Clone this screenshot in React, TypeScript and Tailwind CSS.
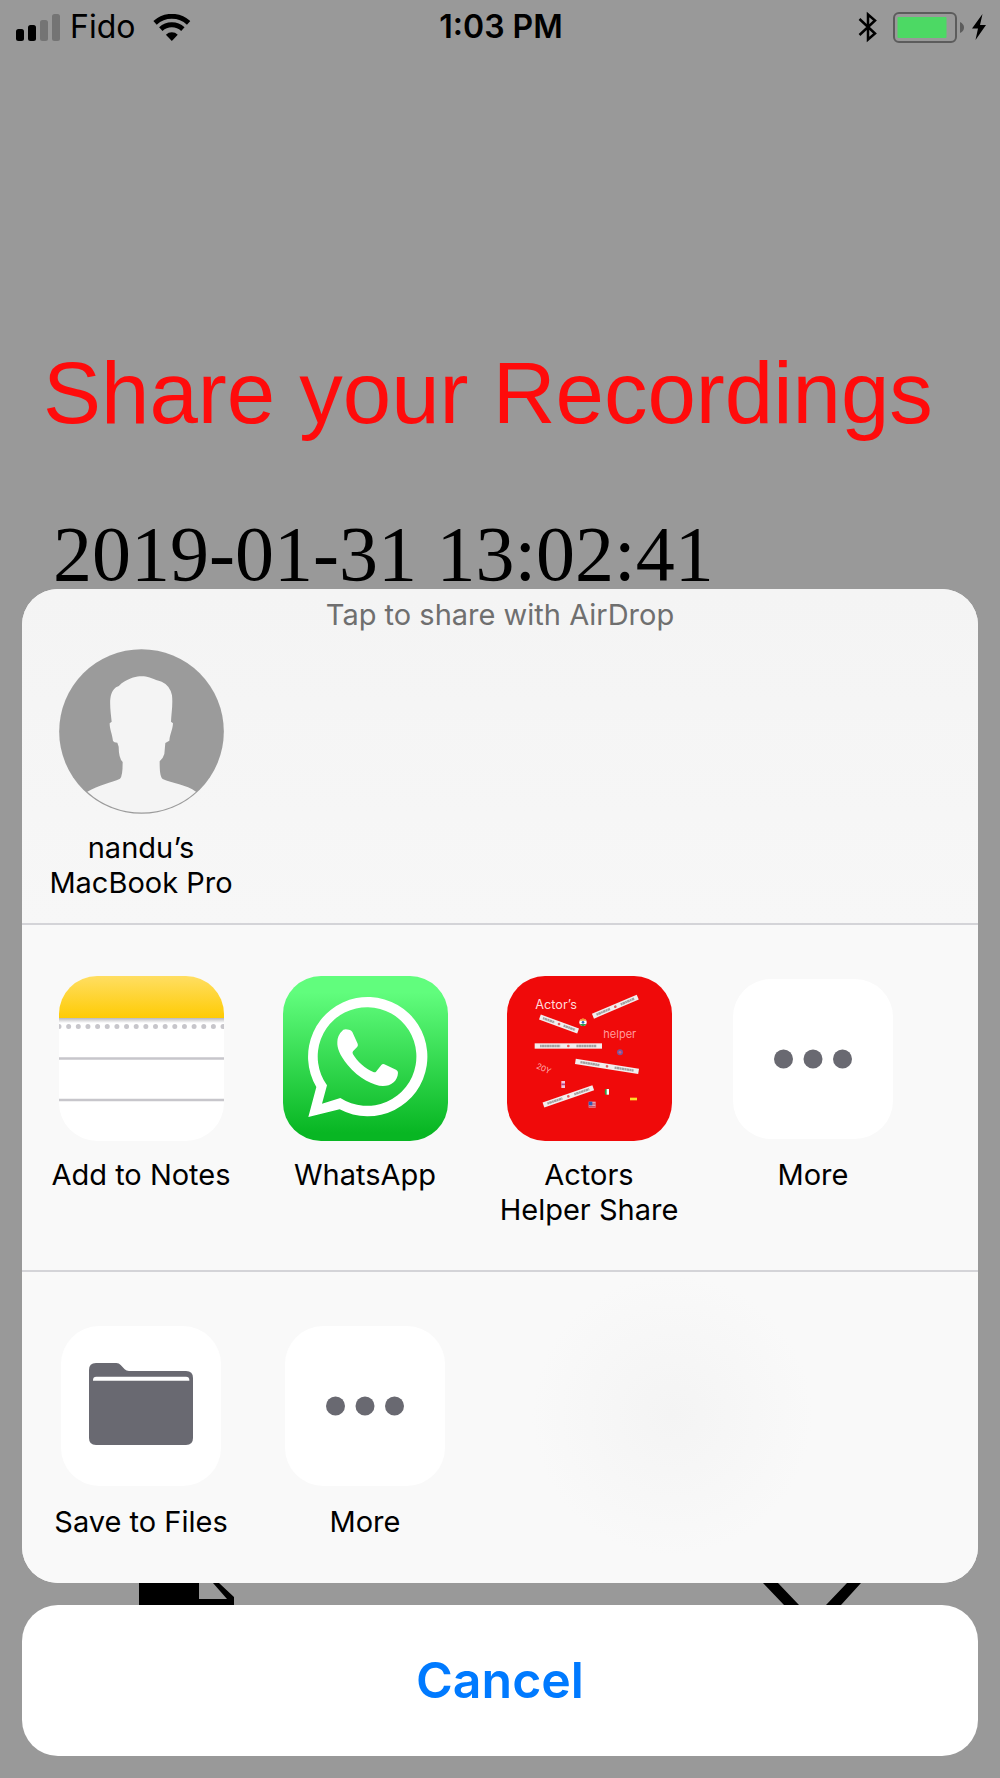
import type { ReactNode } from 'react';

interface ShareItemProps {
  label: string;
  children: ReactNode;
}

function ShareItem({ label, children }: ShareItemProps) {
  return (
    <button type="button" className="flex w-56 flex-col items-center gap-4">
      <span className="flex size-[165px] items-center justify-center">{children}</span>
      <span className="text-[29px] leading-[35px] whitespace-pre-line text-black">{label}</span>
    </button>
  );
}

function SignalIcon() {
  return (
    <svg width="44" height="27" viewBox="0 0 44 27" aria-hidden="true">
      <rect x="0" y="15" width="8" height="12" rx="2.500" />
      <rect x="12" y="11" width="8" height="16" rx="2.500" />
      <rect x="24" y="6" width="8" height="21" rx="2.500" fill="#747474" />
      <rect x="36" y="0" width="8" height="27" rx="2.500" fill="#747474" />
    </svg>
  );
}

function WifiIcon() {
  return (
    <svg width="38" height="27" viewBox="452 39 113 82" aria-hidden="true">
      <g fill="none" stroke="#000" strokeWidth="15">
        <path d="M457 66 A75 75 0 0 1 559 66" />
        <path d="M474.500 85 A49 49 0 0 1 541.500 85" />
      </g>
      <path d="M490 102 A26 26 0 0 1 526 102 L508 121 Z" />
    </svg>
  );
}

function BluetoothIcon() {
  return (
    <svg width="19" height="32" viewBox="0 0 19 32" fill="none" stroke="#000" strokeWidth="2.500" aria-hidden="true">
      <path d="M1.500 8 L17 22.500 L10 28.500 V3.500 L17 9.500 L1.500 24" />
    </svg>
  );
}

function BatteryIcon() {
  return (
    <svg width="71" height="31" viewBox="0 0 71 31" aria-hidden="true">
      <rect x="1" y="1" width="62" height="29" rx="5" fill="none" stroke="#5c5c5c" strokeWidth="2" />
      <rect x="4.500" y="5" width="49" height="21" rx="1" fill="#4cd964" />
      <path d="M67 10 Q71 12 71 15.500 Q71 19 67 21 Z" fill="#5c5c5c" />
    </svg>
  );
}

function BoltIcon() {
  return (
    <svg width="14" height="26" viewBox="0 0 14 26" aria-hidden="true">
      <path d="M10.500 0 L0 14.500 H6 L3.500 26 L14 11 H8 Z" />
    </svg>
  );
}

function AvatarIcon() {
  return (
    <svg className="size-full" viewBox="117 57 495 495" aria-hidden="true">
      <circle cx="364.500" cy="304.500" r="247" fill="#9b9b9b" />
      <path
        fill="#f4f4f4"
        d="M202 485 C235 465 275 458 300 446 Q308 440 308 396 Q296 384 296 350 L292 338 Q282 338 279 333 C276 310 269 298 269 280 L275 275 C270 230 264 190 288 172 Q296 171 305 160 C335 140 355 138 371 139 C388 140 400 149 425 155 Q450 166 456 196 C459 225 454 250 453 275 L459 280 C458 300 450 310 448 332 L436 339 L433 372 Q430 384 419 394 C419 420 420 440 428 447 C455 460 500 464 528 485 A243 243 0 0 1 202 485 Z"
      />
    </svg>
  );
}

function NotesIcon() {
  return (
    <svg className="size-full rounded-[38px]" viewBox="0 0 165 165" aria-hidden="true">
      <defs>
        <linearGradient id="notes-top" x1="0" y1="0" x2="0" y2="1">
          <stop offset="0" stopColor="#ffde62" />
          <stop offset="1" stopColor="#fecb04" />
        </linearGradient>
        <linearGradient id="notes-shade" x1="0" y1="0" x2="0" y2="1">
          <stop offset="0" stopColor="#a9a9ad" />
          <stop offset="1" stopColor="#ffffff" />
        </linearGradient>
      </defs>
      <rect width="165" height="165" fill="#fff" />
      <rect y="41" width="165" height="6" fill="url(#notes-shade)" />
      <rect width="165" height="42" fill="url(#notes-top)" />
      <path d="M0 50.500 H166" stroke="#c7c6cb" strokeWidth="5" strokeLinecap="round" strokeDasharray="0 9.650" />
      <path d="M0 82.500 H165 M0 124 H165" stroke="#c7c6cb" strokeWidth="2.600" />
    </svg>
  );
}

function WhatsAppIcon() {
  return (
    <svg className="size-full rounded-[38px]" viewBox="728 47 495 495" aria-hidden="true">
      <defs>
        <linearGradient id="wa-bg" x1="0" y1="0" x2="0" y2="1">
          <stop offset="0.100" stopColor="#61fd7d" />
          <stop offset="0.950" stopColor="#08b623" />
        </linearGradient>
      </defs>
      <rect x="728" y="47" width="495" height="495" fill="url(#wa-bg)" />
      <path
        fill="#fff"
        fillRule="evenodd"
        d="M828 380 A179 179 0 1 1 898 447 L804 470 Z M860 375 L845 430 L900 413 A148 148 0 1 0 860 375 Z"
      />
      <path
        fill="#fff"
        d="M909 208 Q915 206 926 208 Q933 209 936 215 L952 250 Q954 255 951 259 L938 273 Q935 277 938 282 C952 305 973 324 999 335 Q1004 337 1007 334 L1023 314 Q1027 310 1032 312 L1067 328 Q1073 331 1073 337 C1072 362 1052 377 1028 377 C1000 377 955 354 922 314 C897 283 890 262 891 245 Q891 224 909 208 Z"
      />
    </svg>
  );
}

const strips = [
  { x: 206, y: 191, length: 122, angle: 20 },
  { x: 375, y: 139, length: 146, angle: -23 },
  { x: 234, y: 257, length: 202, angle: 0 },
  { x: 350, y: 318, length: 192, angle: 9 },
  { x: 234, y: 408, length: 158, angle: -19 },
];

function ActorsHelperIcon() {
  return (
    <svg className="size-full rounded-[38px]" viewBox="50 47 495 495" aria-hidden="true">
      <rect x="50" y="47" width="495" height="495" fill="#f00a0a" />
      <text x="135" y="147" fontSize="38" fill="#ffdada">Actor’s</text>
      <text x="339" y="233" fontSize="33" fill="#ff9c9c">helper</text>
      <text x="136" y="323" fontSize="24" fill="#ffb4b4" transform="rotate(24 136 323)">20Y</text>
      {strips.map(({ x, y, length, angle }) => (
        <g key={y} transform={`translate(${x} ${y}) rotate(${angle})`}>
          <rect x={-length / 2} y="-8" width={length} height="16" fill="#f2eeee" />
          <path
            d={`M${-length * 0.42} 0 H${-length * 0.12} M${length * 0.12} 0 H${length * 0.42}`}
            stroke="#a39e9e"
            strokeWidth="7"
            strokeDasharray="5 1 8 1"
          />
          <circle r="4" fill="#e35d5d" />
        </g>
      ))}
      {/* flags */}
      <circle cx="278" cy="186" r="11" fill="#fff" />
      <path d="M268 181 A11 11 0 0 1 288 181 Z" fill="#f39a32" />
      <path d="M268 191 A11 11 0 0 0 288 191 Z" fill="#2f9f45" />
      <circle cx="278" cy="186" r="4" fill="#3461b8" />
      <circle cx="389" cy="276" r="9" fill="#77559a" />
      <circle cx="389" cy="276" r="4" fill="#d65c80" />
      <rect x="213" y="362" width="11" height="21" fill="#f4c4da" />
      <path d="M213 372 H224" stroke="#b64386" strokeWidth="5" />
      <path d="M351 386 H345 Q341 395 345 403 H351 Z" fill="#2f9f45" />
      <rect x="349" y="386" width="7" height="17" fill="#fff" />
      <rect x="295" y="424" width="21" height="18" fill="#e5a4b4" />
      <path d="M303 431 H316 M295 439 H316" stroke="#cf4058" strokeWidth="3" />
      <rect x="295" y="424" width="11" height="11" fill="#315bb5" />
      <rect x="419" y="412" width="21" height="8" fill="#ffdc29" />
    </svg>
  );
}

function MoreIcon() {
  return (
    <span className="flex size-40 items-center justify-center rounded-[38px] bg-white">
      <svg width="78" height="20" viewBox="0 0 78 20" fill="#696971" aria-hidden="true">
        <circle cx="9.500" cy="10" r="9.500" />
        <circle cx="39" cy="10" r="9.500" />
        <circle cx="68.500" cy="10" r="9.500" />
      </svg>
    </span>
  );
}

function FolderIcon() {
  return (
    <span className="flex size-40 items-center justify-center rounded-[38px] bg-white pb-1">
      <svg width="104" height="82" viewBox="204 189 312 246" aria-hidden="true">
        <path
          fill="#696971"
          d="M204 210 Q204 189 225 189 H286 Q294 189 299 195 L311 208 Q316 213 324 213 H495 Q516 213 516 234 V414 Q516 435 495 435 H225 Q204 435 204 414 Z"
        />
        <path fill="#fff" d="M216 242 V240 Q216 230 226 230 H495 Q505 230 505 240 V242 Z" />
      </svg>
    </span>
  );
}

export default function App() {
  return (
    <div className="flex min-h-screen flex-col bg-[#999999] font-[Inter,sans-serif] text-black">
      <header className="grid grid-cols-3 items-center pt-2 pr-[14px] pl-4 text-[32px] leading-[38px]">
        <div className="flex items-center gap-[10px]">
          <SignalIcon />
          <span>Fido</span>
          <span className="pl-2">
            <WifiIcon />
          </span>
        </div>
        <time className="text-center font-semibold">1:03 PM</time>
        <div className="flex items-center justify-end gap-2">
          <BluetoothIcon />
          <span className="pl-2">
            <BatteryIcon />
          </span>
          <BoltIcon />
        </div>
      </header>

      <main className="px-[43px] pt-[297px]">
        <h1 className="font-['Liberation_Sans',sans-serif] text-[87px] leading-[100px] whitespace-nowrap text-[#ff0b0b]">
          Share your Recordings
        </h1>
        <p className="px-[10px] pt-[76px] font-['Liberation_Serif',serif] text-[78px] leading-[70px] whitespace-nowrap">
          2019-01-31 13:02:41
        </p>
      </main>

      <div role="dialog" aria-label="Share" className="mt-auto px-[22px] pb-[22px]">
        <div className="overflow-hidden rounded-[36px] bg-[#f9f9f9]">
          <section className="border-b-2 border-[#d4d4d8] bg-linear-to-b from-[#f4f4f4] to-[#f7f7f7] px-[7px] pt-2 pb-[23px]">
            <h2 className="pb-[17px] text-center text-[29px] leading-[35px] text-[#6f6f6f]">
              Tap to share with AirDrop
            </h2>
            <ShareItem label={'nandu’s\nMacBook Pro'}>
              <AvatarIcon />
            </ShareItem>
          </section>

          <section className="flex items-start border-b-2 border-[#d4d4d8] px-[7px] pt-[51px] pb-[43px]">
            <ShareItem label="Add to Notes">
              <NotesIcon />
            </ShareItem>
            <ShareItem label="WhatsApp">
              <WhatsAppIcon />
            </ShareItem>
            <ShareItem label={'Actors\nHelper Share'}>
              <ActorsHelperIcon />
            </ShareItem>
            <ShareItem label="More">
              <MoreIcon />
            </ShareItem>
          </section>

          <section className="flex items-start bg-[radial-gradient(circle_at_68%_46%,#f4f4f4,#f9f9f9_140px)] px-[7px] pt-[51px] pb-11">
            <ShareItem label="Save to Files">
              <FolderIcon />
            </ShareItem>
            <ShareItem label="More">
              <MoreIcon />
            </ShareItem>
          </section>
        </div>

        {/* tab icons of the dimmed page, visible between the two panels */}
        <div className="flex h-[22px] justify-between px-[117px]">
          <svg width="95" height="22" viewBox="0 0 95 22" aria-hidden="true">
            <path d="M0 0 H60 V16 H88 L74 0 H80 L95 14 V22 H0 Z" />
          </svg>
          <svg width="98" height="22" viewBox="0 0 98 22" aria-hidden="true">
            <path d="M0 0 H15 L36 22 H21 Z M84 0 H98 L78 22 H63 Z" />
          </svg>
        </div>

        <button
          type="button"
          className="w-full rounded-[36px] bg-white py-[43px] text-[50px] leading-[65px] font-semibold text-[#007aff]"
        >
          Cancel
        </button>
      </div>
    </div>
  );
}
